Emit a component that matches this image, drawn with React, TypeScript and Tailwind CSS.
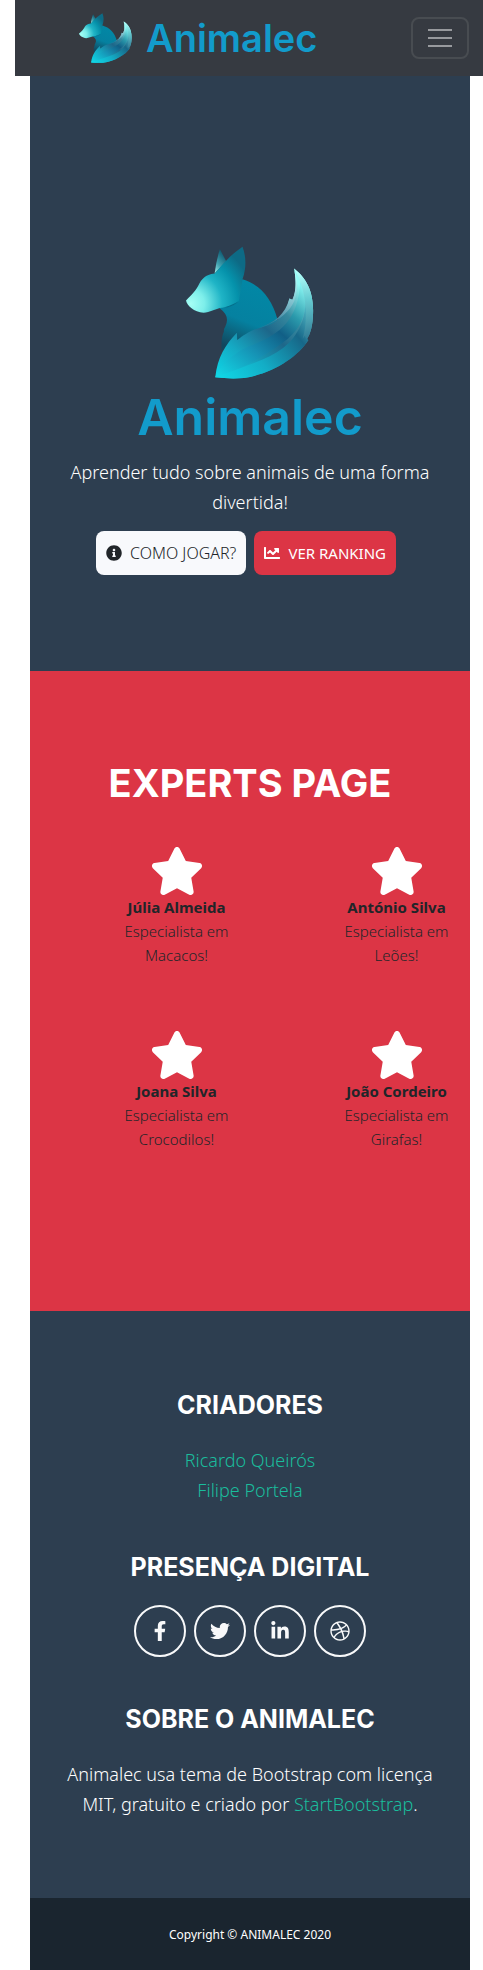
import React, { useId } from "react";
import {
  FaChartLine,
  FaDribbble,
  FaFacebookF,
  FaInfoCircle,
  FaLinkedinIn,
  FaStar,
  FaTwitter,
} from "react-icons/fa";

function Fox({ className }: { className: string }) {
  const id = useId();
  const ref = (name: string) => `url(#${id}${name})`;
  return (
    <svg className={className} viewBox="48 32 385 400" preserveAspectRatio="none" aria-hidden="true">
      <defs>
        <linearGradient id={`${id}ear`} x1="0" y1="1" x2="0.5" y2="0">
          <stop offset="0" stopColor="#9ff5ef" />
          <stop offset="0.45" stopColor="#3f9fae" />
          <stop offset="1" stopColor="#0b5870" />
        </linearGradient>
        <radialGradient id={`${id}head`} gradientUnits="userSpaceOnUse" cx="62" cy="205" r="190">
          <stop offset="0" stopColor="#a5fff5" />
          <stop offset="0.22" stopColor="#7deeea" />
          <stop offset="0.5" stopColor="#1fb4c6" />
          <stop offset="0.75" stopColor="#0592ab" />
          <stop offset="1" stopColor="#0d6a85" />
        </radialGradient>
        <linearGradient id={`${id}body`} gradientUnits="userSpaceOnUse" x1="250" y1="150" x2="175" y2="335">
          <stop offset="0" stopColor="#0287a5" />
          <stop offset="0.55" stopColor="#0581a0" />
          <stop offset="1" stopColor="#12475d" />
        </linearGradient>
        <linearGradient id={`${id}tail`} gradientUnits="userSpaceOnUse" x1="150" y1="425" x2="400" y2="160">
          <stop offset="0" stopColor="#0dd3e4" />
          <stop offset="0.25" stopColor="#15a9c3" />
          <stop offset="0.55" stopColor="#1d678a" />
          <stop offset="0.75" stopColor="#36899f" />
          <stop offset="1" stopColor="#94faf5" />
        </linearGradient>
        <linearGradient id={`${id}mid`} gradientUnits="userSpaceOnUse" x1="150" y1="425" x2="390" y2="150">
          <stop offset="0" stopColor="#12d5e4" />
          <stop offset="0.35" stopColor="#1690b3" />
          <stop offset="0.6" stopColor="#115f86" />
          <stop offset="0.78" stopColor="#2b9aac" />
          <stop offset="1" stopColor="#83f0ee" />
        </linearGradient>
        <linearGradient id={`${id}low`} gradientUnits="userSpaceOnUse" x1="150" y1="425" x2="430" y2="200">
          <stop offset="0" stopColor="#10d6e5" />
          <stop offset="0.35" stopColor="#13adc6" />
          <stop offset="0.72" stopColor="#176788" />
          <stop offset="1" stopColor="#62cfd8" />
        </linearGradient>
        <linearGradient id={`${id}tip`} gradientUnits="userSpaceOnUse" x1="385" y1="110" x2="400" y2="315">
          <stop offset="0" stopColor="#b4fffa" />
          <stop offset="0.4" stopColor="#67cdd3" />
          <stop offset="1" stopColor="#2f7994" />
        </linearGradient>
        <linearGradient id={`${id}inner`} gradientUnits="userSpaceOnUse" x1="380" y1="120" x2="310" y2="270">
          <stop offset="0" stopColor="#b5fffb" />
          <stop offset="0.55" stopColor="#79b8c7" />
          <stop offset="1" stopColor="#347998" />
        </linearGradient>
      </defs>
      <path d="M150 42 L169 78 L134 115 Q139 75 150 42Z" fill={ref("ear")} />
      <path d="M218 132 C270 148 306 188 323 252 C322 280 205 300 155 346 Q153 306 162 290 Q161 281 166 275 Q182 243 150 220 L170 180Z" fill={ref("body")} />
      <path d="M218 34 C174 65 157 90 134 115 C105 119 96 130 84 153 C74 171 55 188 48 196 C51 211 72 231 101 233 C119 232 137 221 154 218 C175 217 194 209 207 198 L215 150 L218 132 C231 94 228 61 218 34Z" fill={ref("head")} />
      <path d="M155 219 C177 218 196 211 207 197 C196 207 172 214 155 219Z" fill="#056f8b" />
      <path d="M373 100 C402 123 434 160 430 239 C429 269 424 294 411 314 L416 315 C385 365 310 416 222 429 Q180 432 136 427 C143 365 167 329 201 293 L202 315 C224 298 242 285 277 276 C314 268 349 242 359 190 L368 194 C380 169 380 136 373 100Z" fill={ref("tail")} />
      <path d="M136 427 C149 390 200 347 244 331 C325 300 388 257 391 138 C427 206 403 279 339 323 C279 365 210 409 136 427Z" fill={ref("mid")} />
      <path d="M136 427 C220 394 289 377 341 338 C395 296 412 235 408 165 C418 220 414 270 407 306 L416 315 C385 365 310 416 222 429 Q180 432 136 427Z" fill={ref("low")} />
      <path d="M373 100 C402 123 434 160 430 239 C429 269 424 294 411 314 L406 301 L399 311 C417 249 411 166 373 100Z" fill={ref("tip")} />
      <path d="M373 100 C390 150 381 196 361 219 C340 246 304 269 265 279 C314 263 346 239 359 190 L368 194 C380 169 380 136 373 100Z" fill={ref("inner")} />
    </svg>
  );
}

const experts = [
  { name: "Júlia Almeida", topic: "Macacos!" },
  { name: "António Silva", topic: "Leões!" },
  { name: "Joana Silva", topic: "Crocodilos!" },
  { name: "João Cordeiro", topic: "Girafas!" },
];

const socials = [
  { label: "Facebook", Icon: FaFacebookF },
  { label: "Twitter", Icon: FaTwitter },
  { label: "LinkedIn", Icon: FaLinkedinIn },
  { label: "Dribbble", Icon: FaDribbble },
];

const linkClass = "text-[#1abc9c] hover:underline";
const footerHeading = "font-[Inter,sans-serif] text-[25px] leading-7 font-bold text-white";

export default function App() {
  return (
    <div className="bg-white font-['Noto_Sans',sans-serif] font-light text-[#212529]">
      <nav className="ml-[15px] flex h-[76px] items-center justify-between bg-[#363a41] pr-[14px] pl-16">
        <a href="#topo" className="flex items-center gap-3.5 font-[Inter,sans-serif] text-[38px] leading-[48px] font-semibold text-[#129bcb]">
          <Fox className="h-[50px] w-[53px]" />
          Animalec
        </a>
        <button
          type="button"
          aria-label="Abrir menu"
          className="flex h-[42px] w-[58px] flex-col items-center justify-center gap-1.5 rounded-lg border-2 border-[#484c51]"
        >
          <span className="h-0.5 w-6 bg-[#989a9e]" />
          <span className="h-0.5 w-6 bg-[#989a9e]" />
          <span className="h-0.5 w-6 bg-[#989a9e]" />
        </button>
      </nav>

      <div className="mr-[13px] ml-[30px] text-center">
        <header id="topo" className="flex flex-col items-center bg-[#2d3e50] px-6 pt-[170px] pb-24 text-white">
          <Fox className="h-[133px] w-32" />
          <h1 className="mt-2 font-[Inter,sans-serif] text-[50px] leading-[60px] font-semibold text-[#129bcb]">Animalec</h1>
          <p className="mt-2.5 text-[18px] leading-[30px]">Aprender tudo sobre animais de uma forma divertida!</p>
          <div className="mt-3.5 flex justify-center gap-2 pr-2">
            <a href="#jogar" className="flex h-11 items-center gap-2 rounded-lg bg-[#f8f9fc] px-2.5 text-base whitespace-nowrap text-[#212529]">
              <FaInfoCircle className="size-4" />
              COMO JOGAR?
            </a>
            <a href="#ranking" className="flex h-11 items-center gap-2 rounded-lg bg-[#dc3545] px-2.5 text-[15px] font-normal whitespace-nowrap">
              <FaChartLine className="size-4" />
              VER RANKING
            </a>
          </div>
        </header>

        <section className="bg-[#dc3545] pt-[92px] pb-40">
          <h2 className="font-[Inter,sans-serif] text-[38px] leading-10 font-bold text-white">EXPERTS PAGE</h2>
          <ul className="mt-11 grid grid-cols-2 gap-y-16">
            {experts.map(({ name, topic }) => (
              <li key={name} className="flex flex-col items-center pr-3.5 pl-[87px] text-[15px] leading-6">
                <FaStar className="h-12 w-[54px] text-white" />
                <strong className="font-bold whitespace-nowrap">{name}</strong>
                <p>Especialista em {topic}</p>
              </li>
            ))}
          </ul>
        </section>

        <footer>
          <div className="bg-[#2d3e50] px-6 pt-20 pb-[79px] text-[18px] leading-[30px] text-white">
            <h4 className={footerHeading}>CRIADORES</h4>
            <p className="mt-[26px]">
              <a href="#ricardo" className={linkClass}>Ricardo Queirós</a>
              <br />
              <a href="#filipe" className={linkClass}>Filipe Portela</a>
            </p>
            <h4 className={`mt-12 ${footerHeading}`}>PRESENÇA DIGITAL</h4>
            <div className="mt-6 flex justify-center gap-2">
              {socials.map(({ label, Icon }) => (
                <a
                  key={label}
                  href={`#${label.toLowerCase()}`}
                  aria-label={label}
                  className="flex size-[52px] items-center justify-center rounded-full border-2 border-[#f8f9fa] text-[#f8f9fa]"
                >
                  <Icon className="size-5" />
                </a>
              ))}
            </div>
            <h4 className={`mt-12 ${footerHeading}`}>SOBRE O ANIMALEC</h4>
            <p className="mt-[26px]">
              Animalec usa tema de Bootstrap com licença MIT, gratuito e criado por{" "}
              <a href="#startbootstrap" className={linkClass}>StartBootstrap</a>.
            </p>
          </div>
          <div className="bg-[#1a252f] pt-[25px] pb-[23px] text-xs leading-6 font-normal text-white">Copyright © ANIMALEC 2020</div>
        </footer>
      </div>
    </div>
  );
}
